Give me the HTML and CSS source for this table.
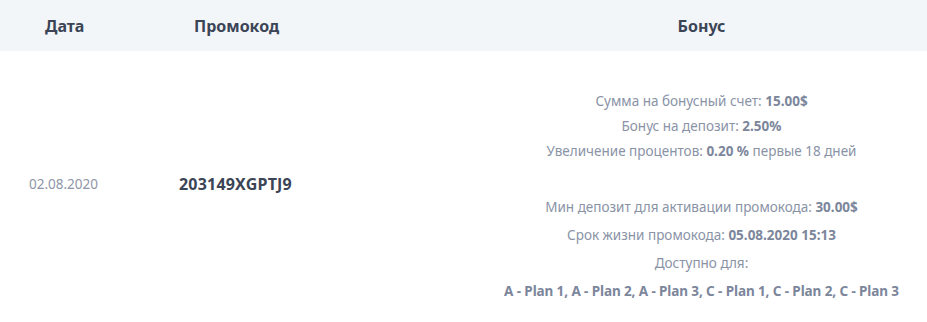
FILE: index.html
```html
<!DOCTYPE html>
<html lang="ru">
<head>
<meta charset="utf-8">
<link rel="stylesheet" href="styles.css">
</head>
<body>
<div class="table">
  <div class="head">
    <div class="th th-date">Дата</div>
    <div class="th th-code">Промокод</div>
    <div class="th th-bonus">Бонус</div>
  </div>
  <div class="row">
    <div class="td td-date">02.08.2020</div>
    <div class="td td-code">203149XGPTJ9</div>
    <div class="td td-bonus">
      <div class="group g1">
        <p>Сумма на бонусный счет: <b>15.00$</b></p>
        <p>Бонус на депозит: <b>2.50%</b></p>
        <p>Увеличение процентов: <b>0.20 %</b> первые 18 дней</p>
      </div>
      <div class="group g2">
        <p>Мин депозит для активации промокода: <b>30.00$</b></p>
        <p>Срок жизни промокода: <b>05.08.2020 15:13</b></p>
        <p>Доступно для:</p>
        <p><b class="plans">A - Plan 1, A - Plan 2, A - Plan 3, C - Plan 1, C - Plan 2, C - Plan 3</b></p>
      </div>
    </div>
  </div>
</div>
</body>
</html>
```
FILE: styles.css
```css
html, body {
  margin: 0;
  padding: 0;
  background: #ffffff;
}
body {
  font-family: "Noto Sans", "Open Sans", sans-serif;
  width: 927px;
  height: 322px;
  overflow: hidden;
}
.table {
  width: 927px;
}
.head {
  display: grid;
  grid-template-columns: 150px 326px 1fr;
  height: 51px;
  align-items: center;
  background: #f3f6f9;
}
.th {
  font-size: 16px;
  font-weight: 700;
  color: #3b4556;
}
.th-date { padding-left: 45px; }
.th-code { padding-left: 44px; }
.th-bonus { text-align: center; }

.row {
  display: grid;
  grid-template-columns: 150px 326px 1fr;
}
.td-date {
  padding-top: 124px;
  padding-left: 29px;
  font-size: 13.5px;
  color: #8e96a8;
}
.td-code {
  padding-top: 122px;
  padding-left: 29px;
  font-size: 16px;
  font-weight: 700;
  color: #3b4556;
  letter-spacing: 0.2px;
}
.td-bonus {
  text-align: center;
  font-size: 13.5px;
  color: #8a93a6;
  padding-top: 38px;
}
.td-bonus p {
  margin: 0;
}
.td-bonus b {
  color: #7c869b;
}
.td-bonus b.plans {
  letter-spacing: -0.1px;
}
.g1 p {
  line-height: 25px;
}
.g2 {
  margin-top: 29px;
}
.g2 p {
  line-height: 28px;
}
```
